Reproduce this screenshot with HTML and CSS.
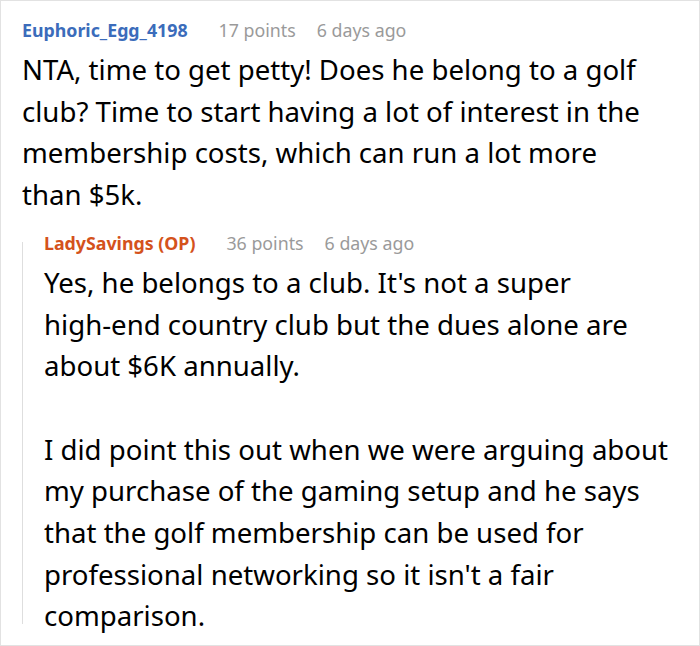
FILE: index.html
```html
<!DOCTYPE html>
<html lang="en">
<head>
<meta charset="utf-8">
<link rel="stylesheet" href="styles.css">
</head>
<body>
<div class="card">
  <div class="comment">
    <div class="meta">
      <span class="author">Euphoric_Egg_4198</span>
      <span class="points">17 points</span>
      <span class="time">6 days ago</span>
    </div>
    <div class="text text-main">
      <p>NTA, time to get petty! Does he belong to a golf club? Time to start having a lot of interest in the membership costs, which can run a lot more than $5k.</p>
    </div>
  </div>
  <div class="reply">
    <div class="meta">
      <span class="author op">LadySavings (OP)</span>
      <span class="points">36 points</span>
      <span class="time">6 days ago</span>
    </div>
    <div class="text text-reply">
      <p>Yes, he belongs to a club. It's not a super high-&#8288;end country club but the dues alone are about $6K annually.</p>
      <p>I did point this out when we were arguing about my purchase of the gaming setup and he says that the golf membership can be used for professional networking so it isn't a fair comparison.</p>
    </div>
  </div>
</div>
</body>
</html>
```
FILE: styles.css
```css
html, body {
  margin: 0;
  padding: 0;
  background: #fff;
}
.card {
  width: 700px;
  height: 646px;
  box-sizing: border-box;
  border: 1px solid #e2e2e2;
  padding: 17px 0 0 21px;
  font-family: "Noto Sans", "Open Sans", sans-serif;
  color: #000;
  overflow: hidden;
}
.meta {
  display: flex;
  align-items: baseline;
  font-size: 17.8px;
  line-height: 24px;
  margin-bottom: 7px;
}
.author {
  font-weight: 700;
  color: #3b6cbb;
  margin-right: 31px;
}
.author.op {
  color: #d4521c;
}
.points {
  color: #9a9a9a;
  margin-right: 21px;
}
.time {
  color: #9a9a9a;
}
.text {
  font-size: 27.6px;
  line-height: 41.7px;
}
.text-main {
  max-width: 628px;
}
.text-reply {
  max-width: 636px;
}
.text p {
  margin: 0;
}
.text p + p {
  margin-top: 41.7px;
}
.reply {
  position: relative;
  margin-top: 15px;
  padding-left: 22px;
}
.reply::before {
  content: "";
  position: absolute;
  left: 0;
  top: 11px;
  bottom: 13px;
  width: 1px;
  background: #dedede;
}
```
